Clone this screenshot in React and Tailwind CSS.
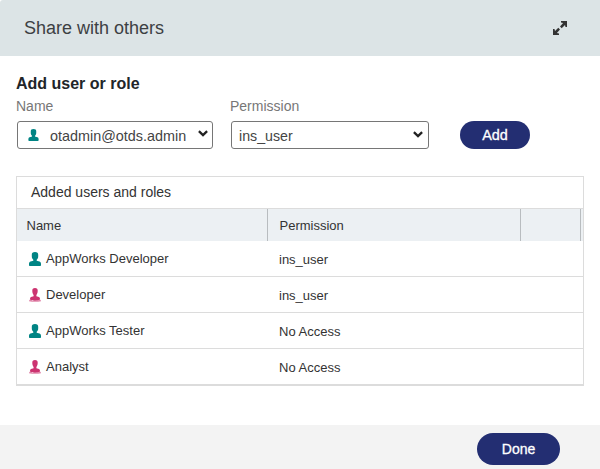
function UserIcon({ className }) {
  return (
    <svg className={className} viewBox="0 0 12 14" fill="#008484">
      <path d="M6 0C3.700 0 2.800 1 2.800 2.700v1.600c0 1.700.5 2.700 1.500 3.500v1C3.300 9.200 1.500 9.200.7 10 .1 10.600 0 11.500 0 12.500v.5c0 .6.400 1 1 1h10c.6 0 1-.4 1-1v-.5c0-1-.1-1.900-.7-2.500-.8-.8-2.600-.8-3.600-1.200v-1c1-.8 1.500-1.800 1.500-3.500V2.700C9.200 1 8.300 0 6 0z" />
    </svg>
  );
}

function RoleIcon({ className }) {
  return (
    <svg className={className} viewBox="0 0 12 14" fill="#cc3370">
      <path d="M6 0C4 0 3.300 1 3.300 2.600c0 2 .4 3.400 1.300 4.300v1.300C3.600 8.700 2 8.800 1.400 9.500 1 10 1 10.700 1 11.600c1.500.9 3 1.100 5 1.100s3.500-.2 5-1.100c0-.9 0-1.600-.4-2.100-.6-.7-2.200-.8-3.200-1.300V6.900c.9-.9 1.300-2.300 1.300-4.300C8.700 1 8 0 6 0z" />
      <path d="M1 11.600C2.300 12.500 4 12.700 6 12.700s3.700-.2 5-1.100c.7.300 1 .9 1 1.700-1.800.4-3.800.5-6 .5s-4.200-.1-6-.5c0-.8.3-1.400 1-1.700z" opacity=".6" />
    </svg>
  );
}

function Chevron({ className }) {
  return (
    <svg className={className} viewBox="0 0 10 7" fill="none" stroke="#222" strokeWidth="2.300">
      <path d="M.9 1.200L5 5.100l4.100-3.900" />
    </svg>
  );
}

const rows = [
  { name: "AppWorks Developer", permission: "ins_user", role: false },
  { name: "Developer", permission: "ins_user", role: true },
  { name: "AppWorks Tester", permission: "No Access", role: false },
  { name: "Analyst", permission: "No Access", role: true },
];

export default function App() {
  return (
    <div className="flex h-[469px] w-[600px] flex-col overflow-hidden bg-white font-['Liberation_Sans',Arial,sans-serif] text-[#333]">
      <header className="flex h-14 shrink-0 items-center justify-between rounded-tl-[3px] bg-[#dce4e6] pr-[33px] pl-6">
        <h1 className="text-lg leading-6 text-[#3c4043]">Share with others</h1>
        <svg className="h-[14px] w-[14px]" viewBox="0 0 14 14" fill="#333">
          <path d="M8 0h6v6h-1.500l-.5-2-3.300 3.300-1.700-1.700L10.100 2 8 1.500z" />
          <path d="M6 14H0V8h1.500l.5 2 3.300-3.300L7 8.400 3.900 12l2.100.5z" />
        </svg>
      </header>

      <main className="flex flex-1 flex-col px-4 pt-[18px]">
        <h2 className="h-5 text-base leading-5 font-bold text-[#212529]">Add user or role</h2>
        <div className="mt-[3px] flex">
          <div className="w-[214px]">
            <div className="h-6 text-sm leading-[19px] text-[#777]">Name</div>
            <div className="ml-px flex h-7 w-[196px] items-center rounded-[3px] border border-[#767676] pr-[4px] pl-[10px]">
              <UserIcon className="h-[12px] w-[11px]" />
              <span className="ml-[11px] flex-1 pt-px text-[14.4px] leading-5 whitespace-nowrap text-[#444]">otadmin@otds.admin</span>
              <Chevron className="mb-[4px] h-[7px] w-[10px]" />
            </div>
          </div>
          <div className="w-[230px]">
            <div className="h-6 text-sm leading-[19px] text-[#777]">Permission</div>
            <div className="ml-px flex h-7 w-[198px] items-center justify-between rounded-[3px] border border-[#767676] pr-[5px] pl-[7px]">
              <span className="pt-px text-[14.2px] leading-5 text-[#444]">ins_user</span>
              <Chevron className="mb-[2px] h-[7px] w-[10px]" />
            </div>
          </div>
          <button className="mt-6 h-7 w-[70px] rounded-full bg-[#232e72] text-[14.4px] leading-7 text-white [-webkit-text-stroke:0.3px_white]">Add</button>
        </div>

        <section className="mt-[27px] border border-[#dcdcdc] text-[13px]">
          <h3 className="h-8 border-b border-[#dcdcdc] pl-[14px] text-sm leading-[30px]">Added users and roles</h3>
          <div className="flex h-8 bg-[#ecf0f3] leading-[33px]">
            <div className="w-[251px] border-r border-[#b8bcbf] pl-[9.5px]">Name</div>
            <div className="w-[253px] border-r border-[#b8bcbf] pl-[11.5px]">Permission</div>
            <div className="w-[60px] border-r border-[#b8bcbf]" />
          </div>
          {rows.map((row) => (
            <div key={row.name} className="flex h-9 border-b border-[#dcdcdc]">
              <div className="flex w-[251px] items-center pl-3">
                {row.role ? <RoleIcon className="h-[14px] w-3" /> : <UserIcon className="h-[14px] w-3" />}
                <span className="ml-[5px] leading-[35px]">{row.name}</span>
              </div>
              <div className="pl-[11px] leading-[37px]">{row.permission}</div>
            </div>
          ))}
        </section>
      </main>

      <footer className="flex h-11 shrink-0 justify-end bg-[#f3f3f3] pt-2 pr-10">
        <button className="h-8 w-[83px] rounded-full bg-[#232e72] text-sm leading-8 text-white [-webkit-text-stroke:0.3px_white]">Done</button>
      </footer>
    </div>
  );
}
